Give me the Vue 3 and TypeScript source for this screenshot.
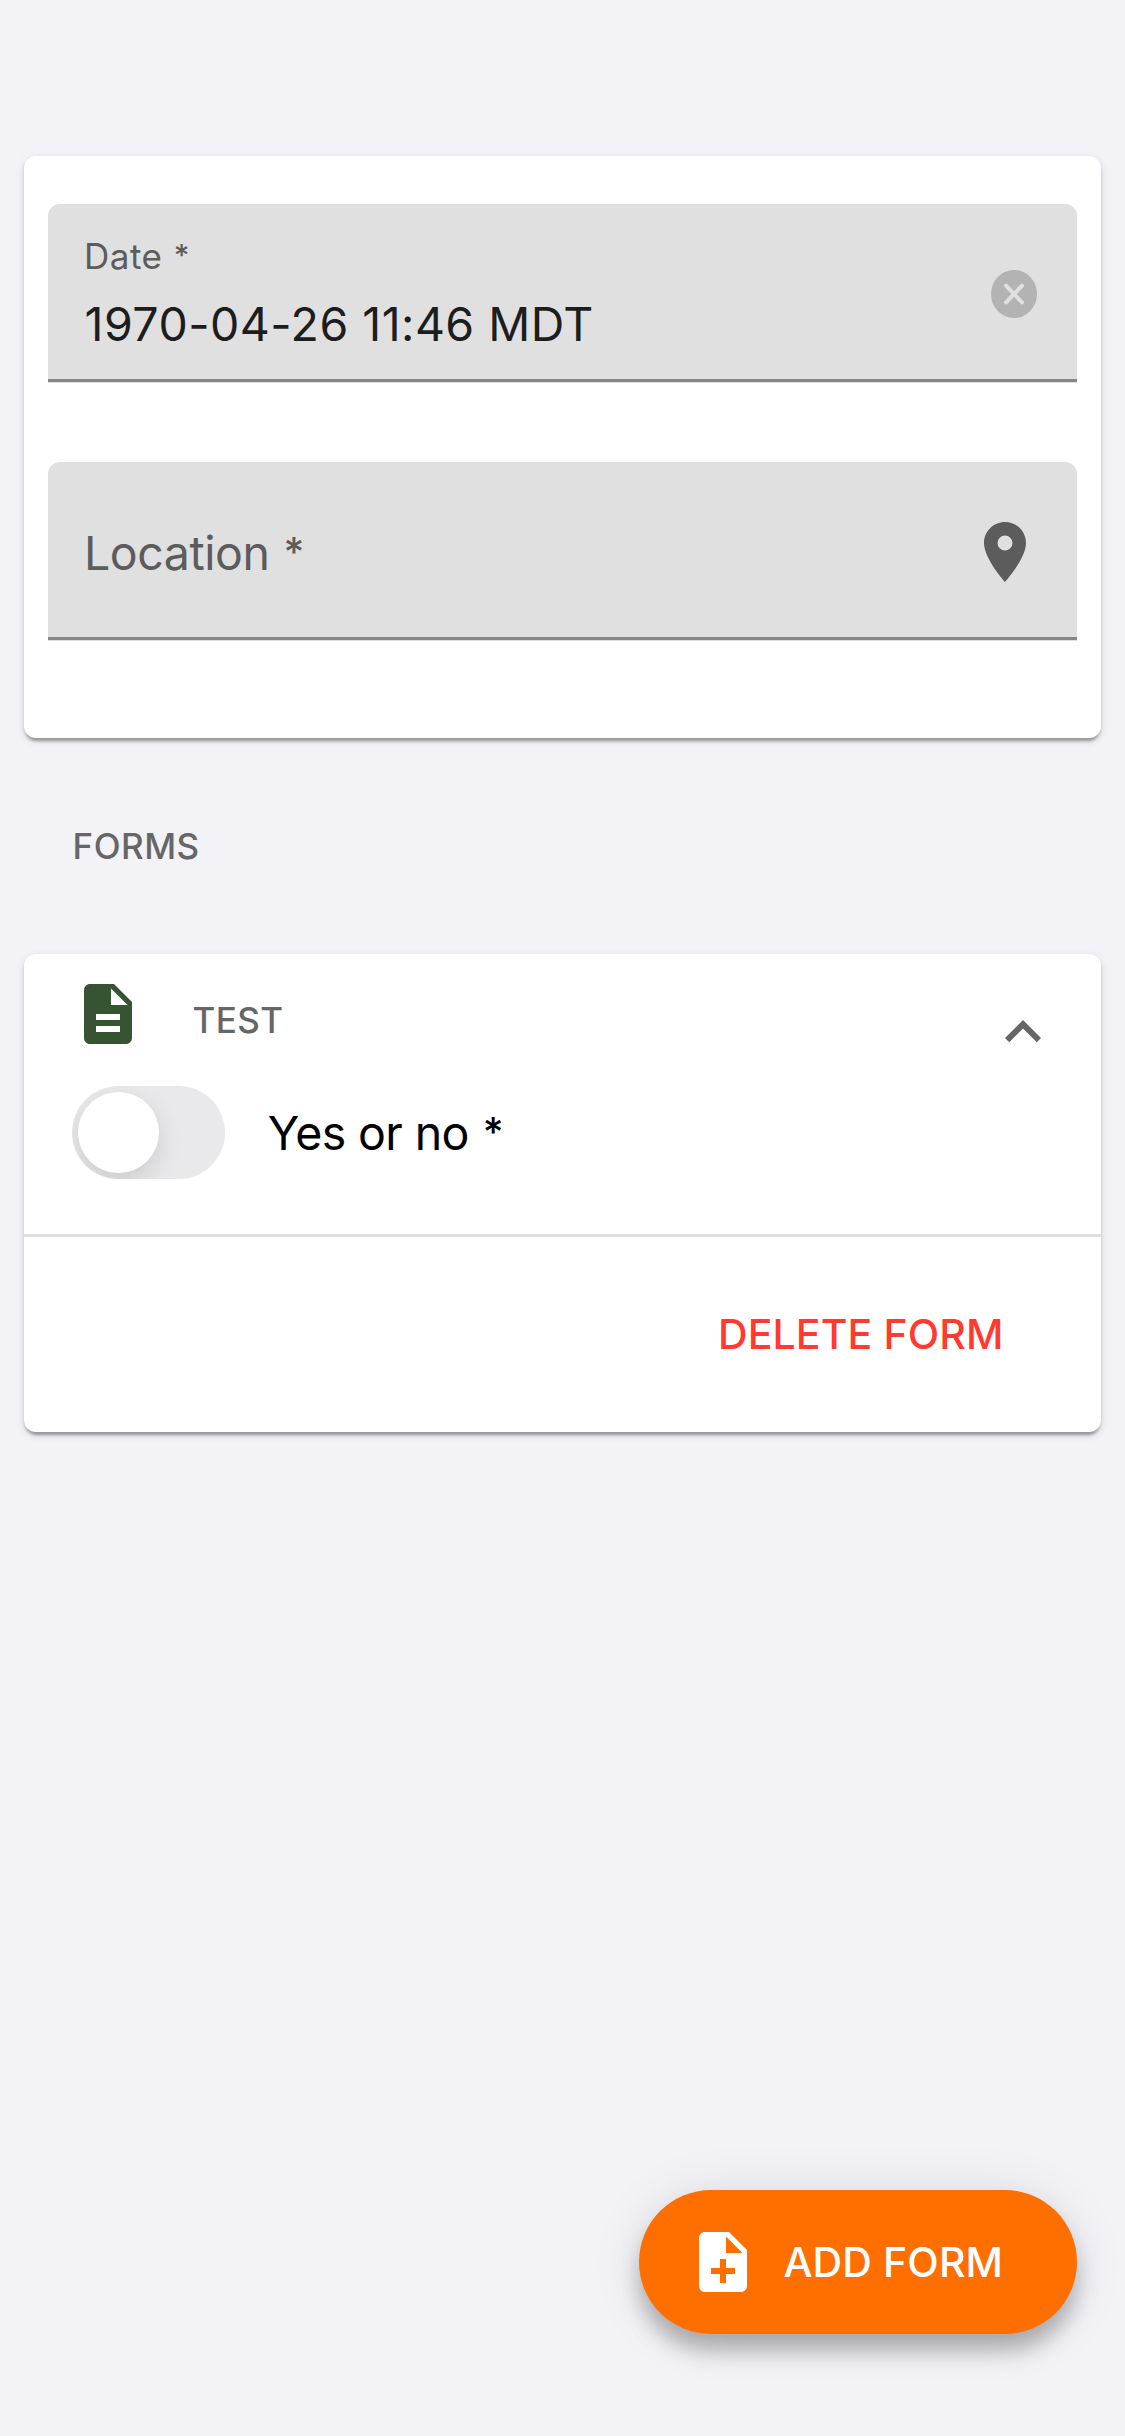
<script setup lang="ts">
import { ref } from 'vue'

const date = ref<string>('1970-04-26 11:46 MDT')
const enabled = ref<boolean>(false)
</script>

<template>
  <main class="page">
    <section class="card details">
      <div class="field">
        <div class="stack">
          <span class="label">Date <span class="required">*</span></span>
          <span class="value">{{ date }}</span>
        </div>
        <svg class="clear" viewBox="0 0 46 48">
          <ellipse cx="23" cy="24" rx="23" ry="24" fill="#b3b3b3" />
          <path d="M15 15.7 31 32.3M31 15.7 15 32.3" stroke="#e0e0e0" stroke-width="4" stroke-linecap="round" />
        </svg>
      </div>
      <div class="field">
        <span class="placeholder">Location <span class="required">*</span></span>
        <svg class="icon pin" viewBox="0 0 24 24">
          <path d="M12 2C8.13 2 5 5.13 5 9c0 5.25 7 13 7 13s7-7.75 7-13c0-3.87-3.13-7-7-7zm0 9.5a2.5 2.5 0 0 1 0-5 2.5 2.5 0 0 1 0 5z" />
        </svg>
      </div>
    </section>

    <h2 class="heading overline">FORMS</h2>

    <section class="card form">
      <header class="form-head">
        <svg class="icon doc" viewBox="0 0 24 24">
          <path d="M14 2H6c-1.1 0-1.99.9-1.99 2L4 20c0 1.1.89 2 1.99 2H18c1.1 0 2-.9 2-2V8l-6-6zm2 16H8v-2h8v2zm0-4H8v-2h8v2zm-3-5V3.5L18.5 9H13z" />
        </svg>
        <span class="overline name">TEST</span>
        <svg class="icon chevron" viewBox="0 0 24 24">
          <path d="M12 8l-6 6 1.41 1.41L12 10.83l4.59 4.58L18 14z" />
        </svg>
      </header>
      <div class="row">
        <span class="switch" role="switch" :aria-checked="enabled" @click="enabled = !enabled">
          <span class="knob" :class="{ on: enabled }"></span>
        </span>
        <span class="question">Yes or no <span class="required">*</span></span>
      </div>
      <footer class="actions">
        <button class="delete">DELETE FORM</button>
      </footer>
    </section>

    <button class="fab">
      <svg class="icon" viewBox="0 0 24 24">
        <path d="M14 2H6c-1.1 0-1.99.9-1.99 2L4 20c0 1.1.89 2 1.99 2H18c1.1 0 2-.9 2-2V8l-6-6zm2 14h-3v3h-2v-3H8v-2h3v-3h2v3h3v2zm-3-7V3.5L18.5 9H13z" />
      </svg>
      <span class="fab-label">ADD FORM</span>
    </button>
  </main>
</template>

<style>
body { margin: 0; background: #f2f2f7; }
</style>

<style scoped>
.page {
  box-sizing: border-box;
  height: 2436px;
  padding: 156px 24px 0;
  background: #f2f2f7;
  font-family: Inter, "Liberation Sans", sans-serif;
  overflow: hidden;
  position: relative;
}
.page * { box-sizing: border-box; }
.label, .value, .placeholder, .overline, .question, .delete, .fab-label { white-space: nowrap; }

.card {
  background: #fff;
  border-radius: 12px;
  box-shadow: 0 6px 3px -3px rgba(0, 0, 0, .2), 0 3px 3px rgba(0, 0, 0, .14), 0 3px 9px rgba(0, 0, 0, .12);
}
.details { height: 582px; padding: 48px 24px 0; display: flex; flex-direction: column; gap: 79px; }

.field {
  height: 179px;
  display: flex;
  justify-content: space-between;
  padding: 0 36px;
  border-radius: 12px 12px 0 0;
  background: linear-gradient(#868686, #868686) 0 175px / 100% 3px no-repeat #e0e0e0;
}
.stack { display: flex; flex-direction: column; align-items: flex-start; padding-top: 31px; gap: 19px; }
.label { font-size: 35px; line-height: 42px; letter-spacing: .5px; color: #5c5c5c; }
.value { font-size: 46.5px; line-height: 56px; letter-spacing: .46px; color: #1d1d1d; margin-left: .6px; }
.placeholder { font-size: 46.5px; line-height: 56px; letter-spacing: -.45px; color: #5c5c5c; margin-top: 63px; }
.required { font-size: .86em; font-weight: 500; line-height: 0; vertical-align: .1em; margin-left: .035em; }

.icon { width: 72px; height: 72px; fill: currentColor; flex: none; display: block; }
.clear { width: 46px; height: 48px; margin: 66px 4px 0 0; }
.pin { color: #5c5c5c; margin-top: 54px; }

.overline { font-size: 35px; line-height: 42px; font-weight: 500; letter-spacing: .5px; color: #666; }
.heading { margin: 0; height: 216px; padding: 87px 0 0 48.5px; }

.form { height: 478px; display: flex; flex-direction: column; }
.form-head { height: 132px; padding: 24px 42px 0 48px; display: flex; }
.doc { color: #365332; }
.name { margin: 21px auto 0 48.4px; letter-spacing: .4px; }
.chevron { color: #666; margin-top: 18px; }

.row { height: 148px; display: flex; padding-left: 48px; }
.switch { width: 153px; height: 93px; border-radius: 47px; background: #e9e9eb; padding: 6px; overflow: hidden; flex: none; }
.knob { display: block; width: 81px; height: 81px; border-radius: 50%; background: #fff; box-shadow: 0 9px 24px rgba(0, 0, 0, .13); }
.knob.on { margin-left: 60px; }
.question { font-size: 46.5px; line-height: 56px; letter-spacing: -.62px; color: #000; margin: 19px 0 0 42.8px; }

.actions {
  flex: 1;
  border-top: 3px solid #e0e0e0;
  display: flex;
  justify-content: flex-end;
  align-items: flex-start;
  padding: 71px 97.5px 0 0;
}
button { border: 0; margin: 0; padding: 0; background: none; font-family: inherit; }
.delete { font-size: 41px; line-height: 52px; font-weight: 500; letter-spacing: .12px; color: #ff3b30; }

.fab {
  position: absolute;
  left: 639px;
  top: 2190px;
  width: 438px;
  height: 144px;
  border-radius: 72px;
  background: #ff6f00;
  color: #fff;
  display: flex;
  padding: 36px 0 0 48px;
  box-shadow: 0 18px 20px -2px rgba(0, 0, 0, .2), 0 15px 30px rgba(0, 0, 0, .09), 0 3px 54px rgba(0, 0, 0, .09);
}
.fab-label { font-size: 41px; line-height: 52px; font-weight: 500; letter-spacing: .12px; margin: 10px 0 0 24.4px; }
</style>
